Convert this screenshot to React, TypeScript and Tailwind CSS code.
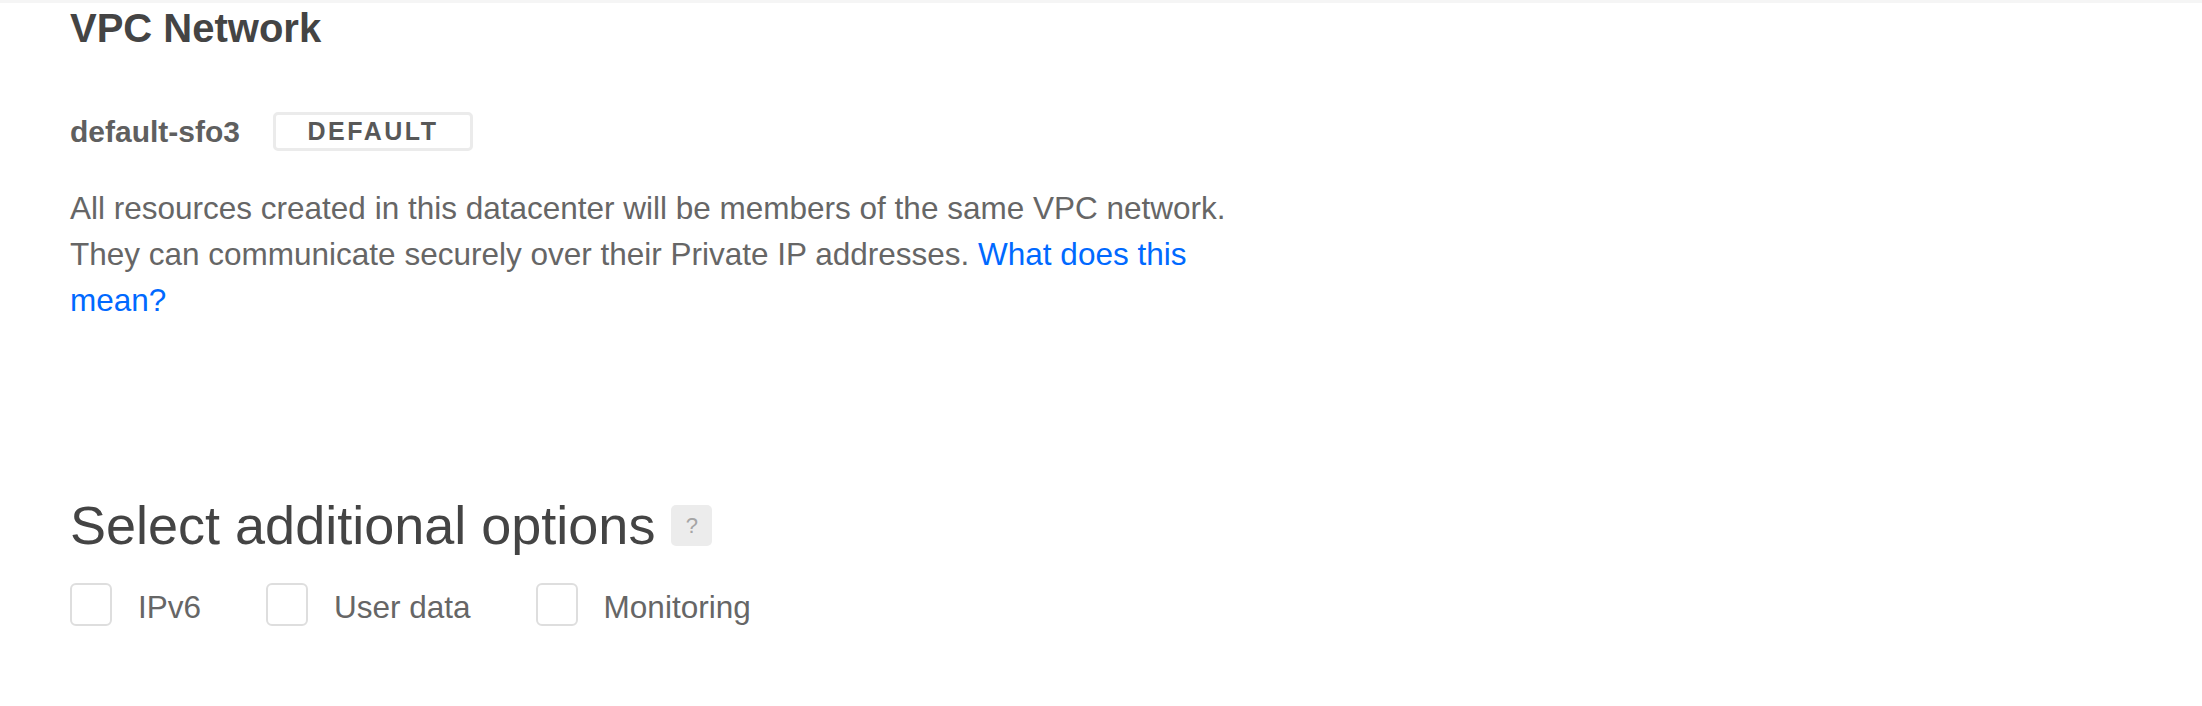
import { useState } from "react";

const font = { fontFamily: '"Liberation Sans", Arial, sans-serif' };

function Option({ label }: { label: string }) {
    const [checked, setChecked] = useState(false);
    return (
        <label className="flex cursor-pointer items-center gap-[26px]">
            <button
                type="button"
                onClick={() => setChecked(!checked)}
                className="h-[43px] w-[42px] rounded-[6px] border-2 border-[#dedede] bg-white"
            />
            <span className="pt-[6px] text-[31.5px] text-[#666]">{label}</span>
        </label>
    );
}

export default function App() {
    return (
        <div className="min-h-[706px] w-full border-t-[3px] border-[#f5f5f5] bg-white pl-[70px] pt-px" style={font}>
            <h2 className="text-[40px] font-bold leading-[48px] text-[#444]">VPC Network</h2>

            <div className="mt-[57px] flex items-center gap-[33px]">
                <span className="text-[30px] font-semibold text-[#5f5f5f]">default-sfo3</span>
                <span className="flex h-[39px] w-[200px] items-center justify-center rounded-[5px] border-[3px] border-[#ebebeb] text-[25px] font-semibold tracking-[2.5px] text-[#585858]">
                    DEFAULT
                </span>
            </div>

            <p className="mt-[31px] w-[1190px] text-[31.5px] leading-[46px] text-[#666]">
                All resources created in this datacenter will be members of the same VPC network.
                They can communicate securely over their Private IP addresses.{" "}
                <a href="#" className="text-[#0069ff]">
                    What does this mean?
                </a>
            </p>

            <div className="mt-[172px] flex items-center gap-4">
                <h2 className="text-[54px] font-normal leading-[60px] text-[#444]">Select additional options</h2>
                <span className="flex h-[41px] w-[41px] items-center justify-center rounded-[5px] bg-[#ececec] text-[22px] text-[#a5a5a5]">
                    ?
                </span>
            </div>

            <div className="mt-[23px] flex items-center gap-[65px]">
                <Option label="IPv6" />
                <Option label="User data" />
                <Option label="Monitoring" />
            </div>
        </div>
    );
}
